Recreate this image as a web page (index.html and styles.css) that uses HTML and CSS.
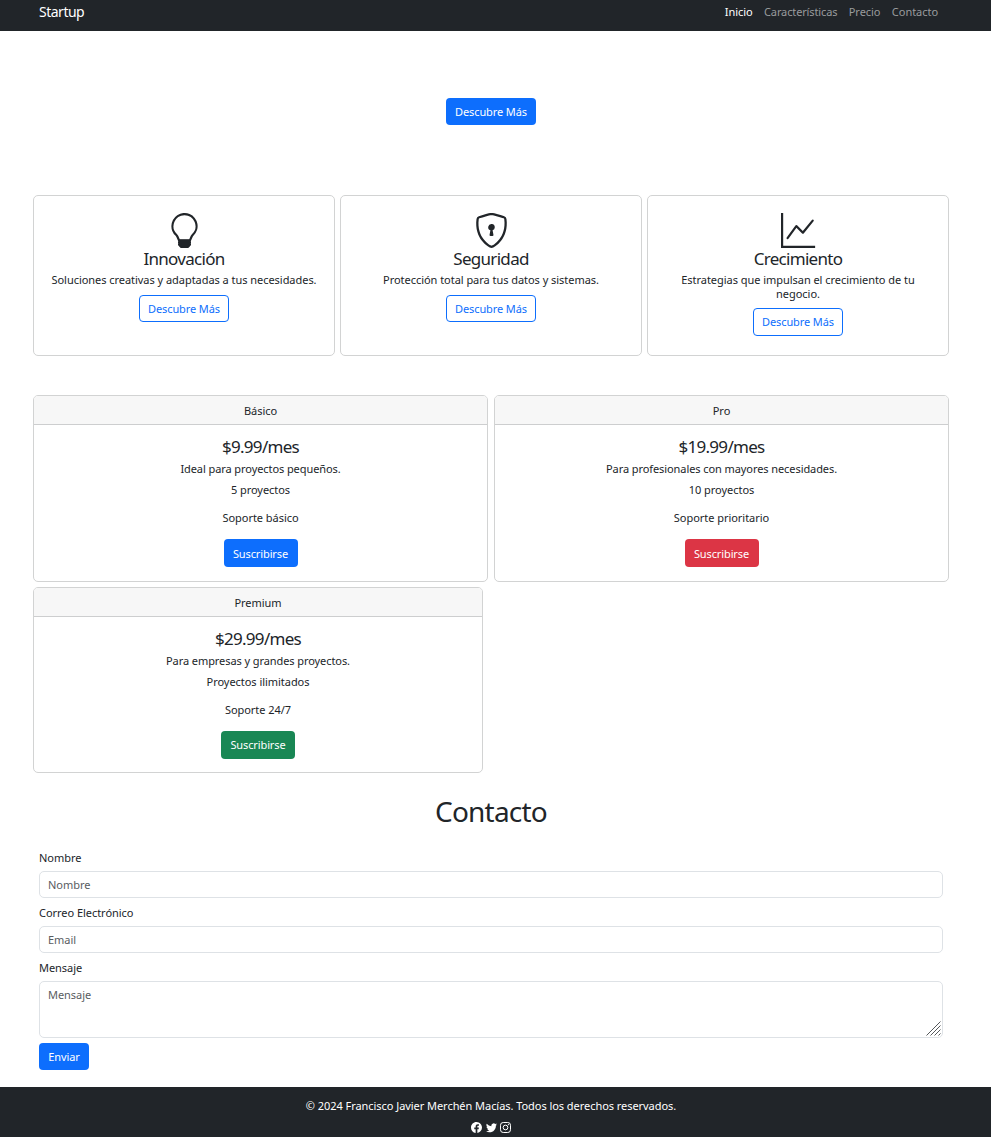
FILE: index.html
```html
<!DOCTYPE html>
<html lang="es">
<head>
<meta charset="utf-8">
<title>Startup</title>
<link rel="stylesheet" href="styles.css">
</head>
<body>
<nav class="navbar">
  <a class="brand">Startup</a>
  <div class="links">
    <a class="link active">Inicio</a>
    <a class="link long">Características</a>
    <a class="link">Precio</a>
    <a class="link">Contacto</a>
  </div>
</nav>
<header class="hero"><a class="btn primary">Descubre Más</a></header>
<main class="container">
  <section class="features">
    <article class="card feature">
      <svg class="feature-icon" viewBox="0 0 16 16" fill="currentColor"><path d="M2 6a6 6 0 1 1 10.174 4.31c-.203.196-.359.4-.453.619l-.762 1.769A.5.5 0 0 1 10.5 13a.5.5 0 0 1 0 1 .5.5 0 0 1 0 1l-.224.447a1 1 0 0 1-.894.553H6.618a1 1 0 0 1-.894-.553L5.5 15a.5.5 0 0 1 0-1 .5.5 0 0 1 0-1 .5.5 0 0 1-.46-.302l-.761-1.77a1.964 1.964 0 0 0-.453-.618A5.984 5.984 0 0 1 2 6m6-5a5 5 0 0 0-3.479 8.592c.263.254.514.564.676.941L5.83 12h4.342l.632-1.467c.162-.377.413-.687.676-.941A5 5 0 0 0 8 1"/><path d="M5.15 12.2h5.7v2.2l-.5.9H5.65l-.5-.9z"/></svg>
      <h5 class="title">Innovación</h5>
      <p class="text">Soluciones creativas y adaptadas a tus necesidades.</p>
      <a class="btn outline">Descubre Más</a>
    </article>
    <article class="card feature">
      <svg class="feature-icon" viewBox="0 0 16 16" fill="currentColor"><path d="M5.338 1.59a61.44 61.44 0 0 0-2.837.856.481.481 0 0 0-.328.39c-.554 4.157.726 7.19 2.253 9.188a10.725 10.725 0 0 0 2.287 2.233c.346.244.652.42.893.533.12.057.218.095.293.118a.55.55 0 0 0 .101.025.615.615 0 0 0 .1-.025c.076-.023.174-.061.294-.118.24-.113.547-.29.893-.533a10.726 10.726 0 0 0 2.287-2.233c1.527-1.997 2.807-5.031 2.253-9.188a.48.48 0 0 0-.328-.39c-.651-.213-1.75-.56-2.837-.855C9.552 1.29 8.531 1.067 8 1.067c-.53 0-1.552.223-2.662.524zM5.072.56C6.157.265 7.31 0 8 0s1.843.265 2.928.56c1.11.3 2.229.655 2.887.87a1.54 1.54 0 0 1 1.044 1.262c.596 4.477-.787 7.795-2.465 9.99a11.775 11.775 0 0 1-2.517 2.453 7.159 7.159 0 0 1-1.048.625c-.28.132-.581.24-.829.24s-.548-.108-.829-.24a7.158 7.158 0 0 1-1.048-.625 11.777 11.777 0 0 1-2.517-2.453C1.928 10.487.545 7.169 1.141 2.692A1.54 1.54 0 0 1 2.185 1.43 62.456 62.456 0 0 1 5.072.56"/><path d="M9.5 6.5a1.5 1.5 0 0 1-1 1.415l.385 1.99a.5.5 0 0 1-.491.595h-.788a.5.5 0 0 1-.49-.595l.384-1.99a1.5 1.5 0 1 1 2-1.415"/></svg>
      <h5 class="title">Seguridad</h5>
      <p class="text">Protección total para tus datos y sistemas.</p>
      <a class="btn outline">Descubre Más</a>
    </article>
    <article class="card feature">
      <svg class="feature-icon" viewBox="0 0 16 16" fill="currentColor"><path fill-rule="evenodd" d="M0 0h1v15h14.6v1H0zm14.817 3.113a.5.5 0 0 1 .07.704l-4.5 5.5a.5.5 0 0 1-.74.037L7.06 6.767l-3.656 5.027a.5.5 0 0 1-.808-.588l4-5.5a.5.5 0 0 1 .758-.06l2.609 2.61 4.15-5.073a.5.5 0 0 1 .704-.07"/></svg>
      <h5 class="title">Crecimiento</h5>
      <p class="text tall">Estrategias que impulsan el crecimiento de tu<br>negocio.</p>
      <a class="btn outline high">Descubre Más</a>
    </article>
  </section>
  <section class="plans">
    <article class="card plan">
      <div class="plan-head">Básico</div>
      <h5 class="title">$9.99/mes</h5>
      <p class="text">Ideal para proyectos pequeños.</p>
      <p class="item">5 proyectos</p>
      <p class="item">Soporte básico</p>
      <a class="btn primary subscribe">Suscribirse</a>
    </article>
    <article class="card plan">
      <div class="plan-head">Pro</div>
      <h5 class="title">$19.99/mes</h5>
      <p class="text">Para profesionales con mayores necesidades.</p>
      <p class="item">10 proyectos</p>
      <p class="item">Soporte prioritario</p>
      <a class="btn danger subscribe">Suscribirse</a>
    </article>
    <article class="card plan premium">
      <div class="plan-head">Premium</div>
      <h5 class="title">$29.99/mes</h5>
      <p class="text">Para empresas y grandes proyectos.</p>
      <p class="item">Proyectos ilimitados</p>
      <p class="item">Soporte 24/7</p>
      <a class="btn success subscribe">Suscribirse</a>
    </article>
  </section>
  <section class="contact">
    <h2 class="heading">Contacto</h2>
    <form class="form">
      <label class="label" for="name">Nombre</label>
      <input class="control" id="name" type="text" placeholder="Nombre">
      <label class="label" for="email">Correo Electrónico</label>
      <input class="control" id="email" type="email" placeholder="Email">
      <label class="label" for="message">Mensaje</label>
      <div class="area-wrap">
        <textarea class="control area" id="message" placeholder="Mensaje"></textarea>
        <svg class="grip" viewBox="0 0 15 15" fill="none" stroke="#55585b" stroke-width="1"><path d="M.5 14.5l14-14M4.5 14.5l10-10M8.5 14.5l6-6M12.5 14.5l2-2"/></svg>
      </div>
      <button class="btn primary send" type="button">Enviar</button>
    </form>
  </section>
</main>
<footer class="footer">
  <p class="copy">© 2024 Francisco Javier Merchén Macías. Todos los derechos reservados.</p>
  <div class="social">
    <svg class="social-icon" viewBox="0 0 16 16" fill="currentColor"><path d="M16 8.049c0-4.446-3.582-8.05-8-8.05C3.58 0-.002 3.603-.002 8.05c0 4.017 2.926 7.347 6.75 7.951v-5.625h-2.03V8.05H6.75V6.275c0-2.017 1.195-3.131 3.022-3.131.876 0 1.791.157 1.791.157v1.98h-1.009c-.993 0-1.303.621-1.303 1.258v1.51h2.218l-.354 2.326H9.25V16c3.824-.604 6.75-3.934 6.75-7.951"/></svg>
    <svg class="social-icon" viewBox="0 0 16 16" fill="currentColor"><path d="M5.026 15c6.038 0 9.341-5.003 9.341-9.334 0-.14 0-.282-.006-.422A6.685 6.685 0 0 0 16 3.542a6.658 6.658 0 0 1-1.889.518 3.301 3.301 0 0 0 1.447-1.817 6.533 6.533 0 0 1-2.087.793A3.286 3.286 0 0 0 7.875 6.03a9.325 9.325 0 0 1-6.767-3.429 3.289 3.289 0 0 0 1.018 4.382A3.323 3.323 0 0 1 .64 6.575v.045a3.288 3.288 0 0 0 2.632 3.218 3.203 3.203 0 0 1-.865.115 3.23 3.23 0 0 1-.614-.057 3.283 3.283 0 0 0 3.067 2.277A6.588 6.588 0 0 1 .78 13.58a6.32 6.32 0 0 1-.78-.045A9.344 9.344 0 0 0 5.026 15"/></svg>
    <svg class="social-icon" viewBox="0 0 16 16" fill="none" stroke="currentColor" stroke-width="1.45"><rect x=".72" y=".72" width="14.56" height="14.56" rx="4"/><circle cx="8" cy="8" r="3.4"/><circle cx="12.3" cy="3.7" r=".95" fill="currentColor" stroke="none"/></svg>
  </div>
</footer>
</body>
</html>
```
FILE: styles.css
```css
* { box-sizing: border-box; }
body { margin: 0; background: #fff; color: #212529; font: 11px/14px "Noto Sans", "Open Sans", sans-serif; letter-spacing: -0.04px; }
h2, h5, p { margin: 0; font-weight: 400; }
.navbar { height: 31px; background: #212529; display: flex; justify-content: space-between; padding: 0 53px 0 39px; color: #fff; line-height: 24px; }
.brand { font-size: 14px; letter-spacing: -0.5px; }
.links { display: flex; gap: 11.4px; }
.link { color: #999b9d; }
.link.long { letter-spacing: -0.13px; }
.link.active { color: #fff; }
.hero { width: 982px; height: 164px; padding-top: 67px; text-align: center; }
.btn { display: inline-block; height: 27px; padding: 0 8px; border: 1px solid transparent; border-radius: 4px; line-height: 25px; color: #fff; font-family: inherit; font-size: 11px; letter-spacing: -0.1px; text-align: center; }
.high { height: 28px; }
.subscribe { width: 74px; height: 28px; line-height: 27px; letter-spacing: -0.12px; }
.premium .subscribe { line-height: 26px; }
.send { width: 50px; }
.primary { background: #0d6efd; }
.danger { background: #dc3545; }
.success { background: #198754; }
.outline { color: #0d6efd; border-color: #0d6efd; background: #fff; }
.container { width: 916px; margin-left: 33px; }
.card { border: 1px solid #d2d3d3; border-radius: 5px; text-align: center; display: flex; flex-direction: column; align-items: center; }
.features { display: grid; grid-template-columns: repeat(3, 302px); gap: 5px; }
.feature { height: 161px; padding-top: 17px; }
.feature-icon { width: 35px; height: 35px; display: block; }
.title { font-size: 17px; line-height: 21px; letter-spacing: -0.7px; }
.feature .text { margin: 4px 0 8px; }
.feature .text.tall { margin-bottom: 7px; }
.plans { margin-top: 39px; display: flex; flex-wrap: wrap; gap: 5px 6px; }
.plan { width: 455px; height: 187px; }
.premium { width: 450px; height: 186px; }
.plan-head { width: 100%; height: 29px; line-height: 29px; background: #f7f7f7; border-bottom: 1px solid #cdcecf; border-radius: 4px 4px 0 0; margin-bottom: 11px; }
.plan .text { margin: 5px 0 7px; letter-spacing: -0.08px; }
.item { margin-bottom: 14px; }
.contact { padding: 21px 6px 0; }
.heading { text-align: center; font-size: 28px; line-height: 34px; margin-bottom: 23px; letter-spacing: -0.8px; }
.form { display: flex; flex-direction: column; align-items: flex-start; }
.label { margin-bottom: 6px; }
.control { width: 904px; height: 27px; border: 1px solid #dee2e6; border-radius: 5px; padding: 0 8px 1px; font: inherit; letter-spacing: inherit; color: #212529; margin-bottom: 8px; background: #fff; }
.control::placeholder { color: #595c5f; opacity: 1; }
.area-wrap { position: relative; margin-bottom: 5px; }
.area { height: 57px; padding-top: 6px; margin-bottom: 0; display: block; resize: none; }
.grip { position: absolute; right: 2px; bottom: 2px; width: 15px; height: 15px; }
.footer { height: 50px; margin-top: 17px; background: #212529; color: #fff; text-align: center; padding: 12px 9px 0 0; }
.copy { letter-spacing: -0.05px; }
.social { display: flex; justify-content: center; gap: 3.5px; margin-top: 9px; }
.social-icon { width: 11px; height: 11px; }
```
